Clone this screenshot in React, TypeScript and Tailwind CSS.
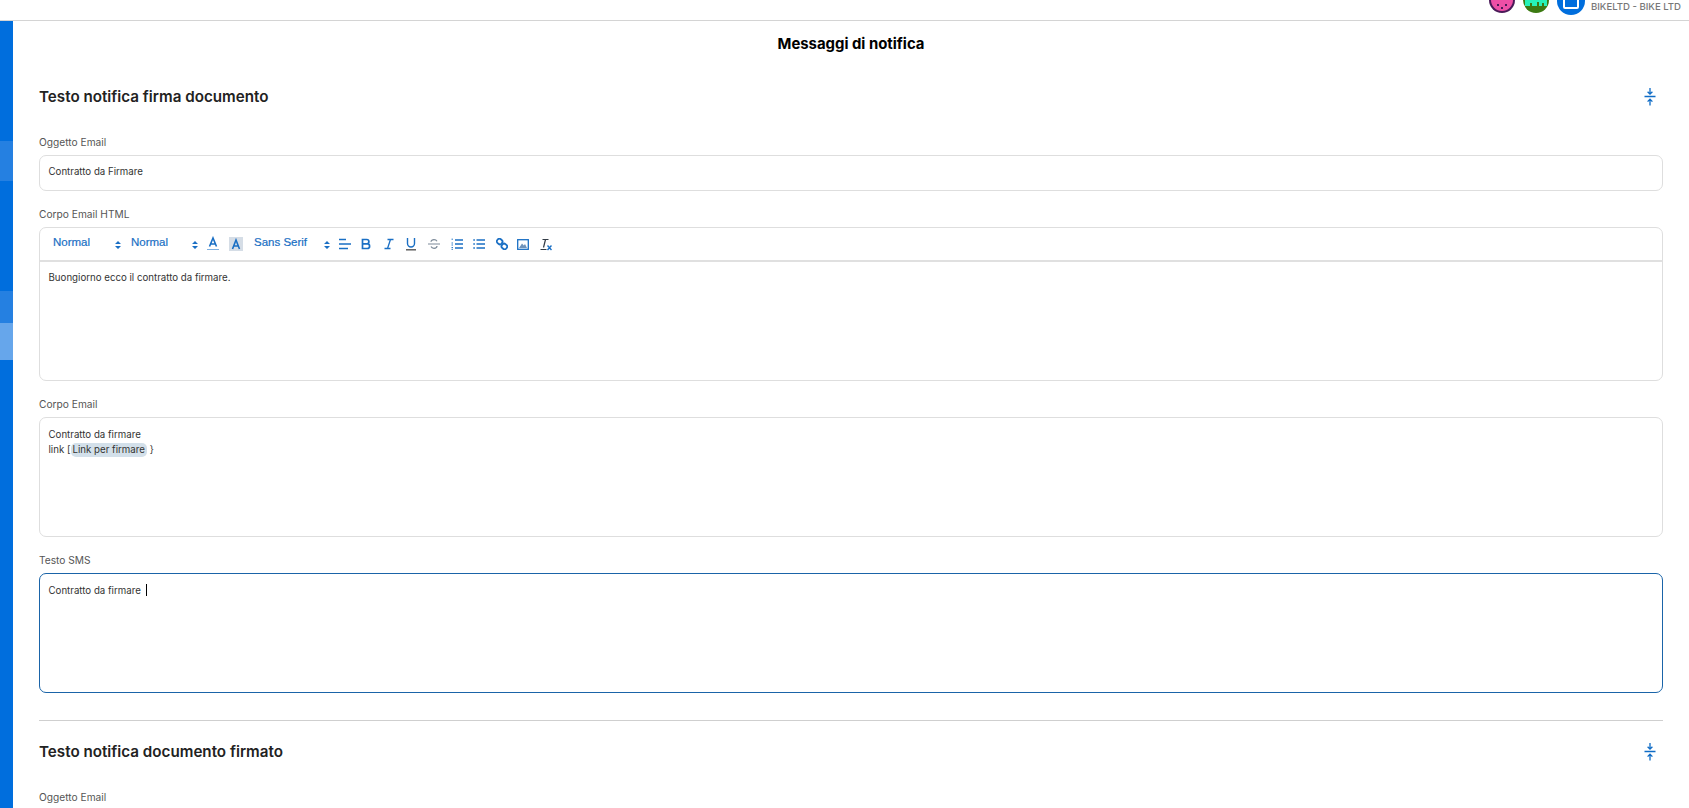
import React from 'react';

const FONT = "font-['Inter','Noto_Sans',sans-serif]";

const CollapseIcon = () => (
  <svg width="12" height="20" viewBox="0 0 12 20" fill="none" stroke="#0f6cc6" strokeWidth="1.3">
    <path d="M6 1v6M3.6 4.8 6 7.2l2.4-2.4M.5 9.5h11M6 18.5v-6M3.6 14.6 6 12.2l2.4 2.4" />
  </svg>
);

const Label = ({ children }: { children: string }) => (
  <div className="text-[10.2px] leading-[13px] text-[#555] mb-[6px]">{children}</div>
);

const PinkAvatar = () => (
  <svg width="26" height="26" viewBox="0 0 26 26" className="mr-[8px]">
    <circle cx="13" cy="13" r="13" fill="#4b1a59" />
    <circle cx="13" cy="13" r="11" fill="#ee4fa6" />
    <rect x="8" y="17" width="2" height="2" fill="#4b1a59" />
    <rect x="16" y="17" width="2" height="2" fill="#4b1a59" />
    <rect x="12" y="20" width="2" height="2" fill="#4b1a59" />
  </svg>
);

const GreenAvatar = () => (
  <svg width="26" height="26" viewBox="0 0 26 26" className="mr-[8px]">
    <circle cx="13" cy="13" r="13" fill="#3c7a12" />
    <path d="M2 13a11 11 0 0 1 22 0v6h-3v-3h-2v3h-3v-4h-2v4H9v-3H7v3H2z" fill="#26f2b8" />
  </svg>
);

function Updown() {
  return (
    <svg width="6" height="8" viewBox="0 0 6 8" fill="#1a6fc4" className="mt-[2px] shrink-0"><path d="M3 0 6 3H0zM3 8 0 5h6z" /></svg>
  );
}

const Toolbar = () => (
  <div className="h-[34px] border-b-2 border-[#e0e0e0] flex items-center text-[#1a6fc4] font-['Liberation_Sans',sans-serif] text-[11.5px] [-webkit-text-stroke:0.2px_#1a6fc4]">
    <div className="w-[75px] pl-[13px] -mt-[2px]">Normal</div>
    <Updown />
    <div className="w-[71px] pl-[10px] -mt-[2px]">Normal</div>
    <Updown />
    <svg width="14" height="16" viewBox="0 0 14 16" className="ml-[8px]" fill="none" stroke="#1a6fc4"><path d="M3.5 10.5 7 2l3.5 8.5M5 8h4" strokeWidth="1.6" /><path d="M1 13.5h12" stroke="#7fb0e0" /></svg>
    <div className="ml-[9px] w-[14px] h-[14px] bg-[#d5dde6] flex items-center justify-center">
      <svg width="12" height="12" viewBox="0 0 12 12" fill="none" stroke="#1a6fc4" strokeWidth="1.6"><path d="M2.5 11 6 2l3.5 9M4 8h4" /></svg>
    </div>
    <div className="w-[70px] ml-[11px] -mt-[2px]">Sans Serif</div>
    <Updown />
    <svg width="14" height="12" viewBox="0 0 14 12" className="ml-[8px]" stroke="#1a6fc4" strokeWidth="1.7"><path d="M1 1.5h7M1 6h12M1 10.5h9" /></svg>
    <svg width="12" height="12" viewBox="0 0 12 12" className="ml-[8px]" fill="none" stroke="#1a6fc4" strokeWidth="1.7"><path d="M2.5 1.5h4.2a2.2 2.2 0 0 1 0 4.4H2.5zM2.5 5.9h4.8a2.3 2.3 0 0 1 0 4.6H2.5z" /></svg>
    <svg width="12" height="12" viewBox="0 0 12 12" className="ml-[11px]" fill="none" stroke="#1a6fc4" strokeWidth="1.3"><path d="M4.5 1.5h6M1.5 10.5h6M7.5 1.5l-3 9" /></svg>
    <svg width="12" height="14" viewBox="0 0 12 14" className="ml-[10px]" fill="none" stroke="#1a6fc4" strokeWidth="1.4"><path d="M2.5 1v5.5a3.5 3.5 0 0 0 7 0V1" /><path d="M1 12.8h10" stroke="#555" /></svg>
    <svg width="12" height="12" viewBox="0 0 12 12" className="ml-[11px]" fill="none" stroke="#7c8a99" strokeWidth="1.2"><path d="M0 6h12M9 3.2C8.4 2.2 7.3 1.7 6 1.7c-1.7 0-3 .9-3 2.1M3 8.6c.5 1.1 1.6 1.7 3 1.7 1.7 0 3-.9 3-2.2" /></svg>
    <svg width="12" height="12" viewBox="0 0 12 12" className="ml-[11px]" stroke="#1a6fc4" strokeWidth="1.4"><path d="M4 2h8M4 6h8M4 10h8" /><path d="M.5 1.2h1.5M.5 5h1.5M.5 7h1.5M.5 9.5h1.5M.5 11.3h1.5" strokeWidth="0.9" /></svg>
    <svg width="12" height="12" viewBox="0 0 12 12" className="ml-[10px]" stroke="#1a6fc4" strokeWidth="1.4"><path d="M3.5 2H12M3.5 6H12M3.5 10H12M.3 2h1.6M.3 6h1.6M.3 10h1.6" /></svg>
    <svg width="12" height="12" viewBox="0 0 12 12" className="ml-[11px]" fill="none" stroke="#1a6fc4" strokeWidth="1.8"><rect x="0.9" y="1" width="5.5" height="5" rx="2.2" transform="rotate(40 3.6 3.5)" /><rect x="5.6" y="6" width="5.5" height="5" rx="2.2" transform="rotate(40 8.4 8.5)" /></svg>
    <svg width="12" height="11" viewBox="0 0 12 11" className="ml-[9px]" fill="none" stroke="#1a6fc4" strokeWidth="1.3"><rect x=".7" y=".7" width="10.6" height="9.6" /><path d="M2 9 5 4.5l1.8 2L8 5l2 4z" fill="#6f93ba" stroke="none" /></svg>
    <svg width="12" height="13" viewBox="0 0 12 13" className="ml-[11px]" fill="none" stroke="#1a6fc4"><path d="M2.5 1.5h6M5.5 1.5l-2 8M.5 11.5h6" strokeWidth="1.2" stroke="#333c46" /><path d="m7.5 7.5 4 4.5m0-4.5-4 4.5" strokeWidth="1.4" /></svg>
  </div>
);

export default function App() {
  return (
    <div className={`${FONT} h-[808px] overflow-hidden bg-white text-[#333]`}>
      <header className="h-[21px] border-b border-[#d4d4d4] flex justify-end overflow-hidden">
        <div className="flex items-start">
          <div className="-mt-[13px] flex">
            <PinkAvatar />
            <GreenAvatar />
          </div>
          <div className="w-[28px] h-[28px] rounded-full bg-[#006edd] -mt-[13px] flex items-center justify-center">
            <div className="w-[16px] h-[16px] border-2 border-white rounded-[2px]" />
          </div>
          <div className="ml-[6px] mr-[8px] text-[9.6px] leading-[14px] font-medium text-[#777]">BIKELTD - BIKE LTD</div>
        </div>
      </header>
      <div className="flex h-[787px]">
        <aside className="w-[13px] shrink-0 bg-[#006edd] flex flex-col pt-[120px]">
          <div className="h-[40px] bg-[#2580e1]" />
          <div className="h-[110px]" />
          <div className="h-[32px] bg-[#2580e1]" />
          <div className="h-[37px] bg-[#66a6eb]" />
        </aside>
        <main className="flex-1 px-[26px]">
          <h1 className="text-center text-[14.9px] leading-[20px] font-bold text-black mt-[13px]">Messaggi di notifica</h1>
          <section className="mt-[29px] flex items-center justify-between h-[28px] pr-[7px]">
            <h2 className="text-[15.2px] font-semibold text-[#222]">Testo notifica firma documento</h2>
            <CollapseIcon />
          </section>
          <div className="mt-[25px]"><Label>Oggetto Email</Label></div>
          <div className="h-[36px] border border-[#dedede] rounded-[7px] px-[8.5px] pb-[2px] flex items-center text-[9.7px]">Contratto da Firmare</div>
          <div className="mt-[17px]"><Label>Corpo Email HTML</Label></div>
          <div className="h-[154px] border border-[#dedede] rounded-[7px]">
            <Toolbar />
            <div className="px-[8.5px] pt-[9px] text-[9.7px] leading-[14px]">Buongiorno ecco il contratto da firmare.</div>
          </div>
          <div className="mt-[17px]"><Label>Corpo Email</Label></div>
          <div className="h-[120px] border border-[#dedede] rounded-[7px] px-[8.5px] pt-[9px] text-[9.7px] leading-[15px]">
            <div>Contratto da firmare</div>
            <div>link [<span className="inline-block leading-[14px] bg-[#d3e0ea] rounded-[5px] px-[2px] mr-[3px]">Link per firmare</span>{'}'}</div>
          </div>
          <div className="mt-[17px]"><Label>Testo SMS</Label></div>
          <div className="h-[120px] border border-[#1a64a8] rounded-[7px] px-[8.5px] pt-[9px] text-[9.7px] leading-[15px] flex items-start">
            <span>Contratto da firmare</span>
            <span className="ml-[5px] w-px h-[12px] bg-black mt-[1px]" />
          </div>
          <hr className="mt-[27px] border-[#cfcfcf]" />
          <section className="mt-[17px] flex items-center justify-between h-[28px] pr-[7px]">
            <h2 className="text-[15.2px] font-semibold text-[#222]">Testo notifica documento firmato</h2>
            <CollapseIcon />
          </section>
          <div className="mt-[25px]"><Label>Oggetto Email</Label></div>
        </main>
      </div>
    </div>
  );
}
